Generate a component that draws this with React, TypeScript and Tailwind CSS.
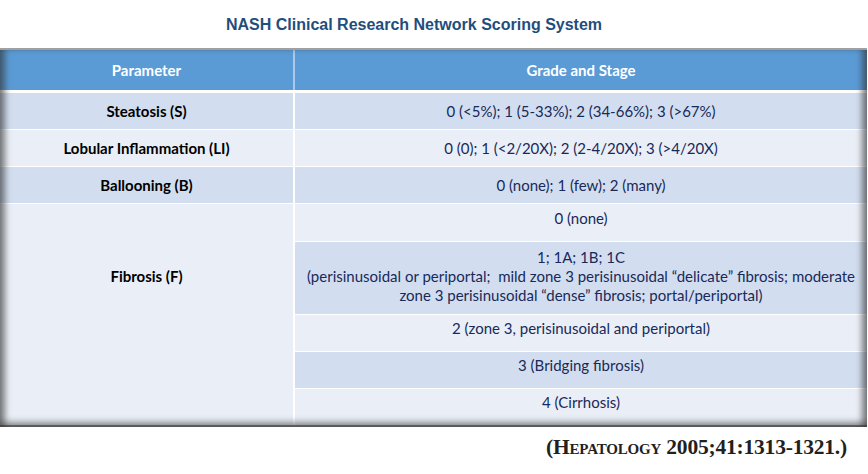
const rows = [
  { label: "Steatosis (S)", value: "0 (<5%); 1 (5-33%); 2 (34-66%); 3 (>67%)", dark: true },
  { label: "Lobular Inflammation (LI)", value: "0 (0); 1 (<2/20X); 2 (2-4/20X); 3 (>4/20X)", dark: false },
  { label: "Ballooning (B)", value: "0 (none); 1 (few); 2 (many)", dark: true },
];

const body = "font-['Lato','Open_Sans',sans-serif] text-[15px]";

export default function App() {
  return (
    <div className="w-[868px] h-[474px] bg-white overflow-hidden">
      {/* title */}
      <div className="h-[48px] flex items-center justify-center pr-[40px] pt-[1px]">
        <h1 className="font-['Liberation_Sans',Arial,sans-serif] font-bold text-[16px] text-[#1f4e7d]">
          NASH Clinical Research Network Scoring System
        </h1>
      </div>

      {/* table */}
      <div className="relative w-[867px] border-t-2 border-[#a0a0a0] bg-white">
        <div className="grid grid-cols-[293px_1fr] gap-x-[2px] bg-[#a9c8ea] h-[40px]">
          <div className={`bg-[#5b9bd5] flex items-center justify-center text-white font-bold ${body}`}>Parameter</div>
          <div className={`bg-[#5b9bd5] flex items-center justify-center text-white font-bold ${body}`}>Grade and Stage</div>
        </div>

        <div className="flex flex-col gap-[1px] pt-[3px] bg-white">
          {rows.map((r) => (
            <div key={r.label} className="grid grid-cols-[293px_1fr] gap-x-[2px] h-[36px]">
              <div className={`${r.dark ? "bg-[#d2deef]" : "bg-[#eaeff7]"} flex items-center justify-center text-black font-bold ${body}`}>
                {r.label}
              </div>
              <div className={`${r.dark ? "bg-[#d2deef]" : "bg-[#eaeff7]"} flex items-center justify-center text-[#18295a] ${body}`}>
                {r.value}
              </div>
            </div>
          ))}

          <div className="grid grid-cols-[293px_1fr] gap-x-[2px] h-[221px]">
            <div className={`bg-[#eaeff7] flex items-start justify-center text-black font-bold pt-[61px] ${body}`}>Fibrosis (F)</div>
            <div className="flex flex-col gap-[1px]">
              <div className={`h-[37px] bg-[#eaeff7] flex items-center justify-center text-[#18295a] pb-[8px] ${body}`}>0 (none)</div>
              <div className={`h-[72px] bg-[#d2deef] flex items-center justify-center text-center leading-[19px] text-[#18295a] pb-[4px] ${body}`}>
                <p>
                  1; 1A; 1B; 1C
                  <br />
                  (perisinusoidal or periportal;&nbsp; mild zone 3 perisinusoidal “delicate” fibrosis; moderate
                  <br />
                  zone 3 perisinusoidal “dense” fibrosis; portal/periportal)
                </p>
              </div>
              <div className={`h-[36px] bg-[#eaeff7] flex items-center justify-center text-[#18295a] pb-[10px] ${body}`}>2 (zone 3, perisinusoidal and periportal)</div>
              <div className={`h-[36px] bg-[#d2deef] flex items-center justify-center text-[#18295a] pb-[10px] ${body}`}>3 (Bridging fibrosis)</div>
              <div className={`h-[36px] bg-[#eaeff7] flex items-center justify-center text-[#18295a] pb-[10px] ${body}`}>4 (Cirrhosis)</div>
            </div>
          </div>
        </div>

        <div className="h-[2px] bg-[#8a8a8a]" />

        {/* edge shading over the table */}
        <div className="pointer-events-none absolute inset-0 shadow-[inset_8px_0_6px_-3px_rgba(50,50,50,0.6),inset_-8px_0_6px_-3px_rgba(50,50,50,0.6),inset_0_-8px_6px_-3px_rgba(50,50,50,0.5)]" />
      </div>

      {/* citation */}
      <div className="flex justify-end pr-[21px] pt-[4px]">
        <p className="font-['Liberation_Serif','Times_New_Roman',serif] font-semibold text-[21.5px] text-[#231f20] [font-variant:small-caps] tracking-[-0.2px]">
          (Hepatology 2005;41:1313-1321.)
        </p>
      </div>
    </div>
  );
}
